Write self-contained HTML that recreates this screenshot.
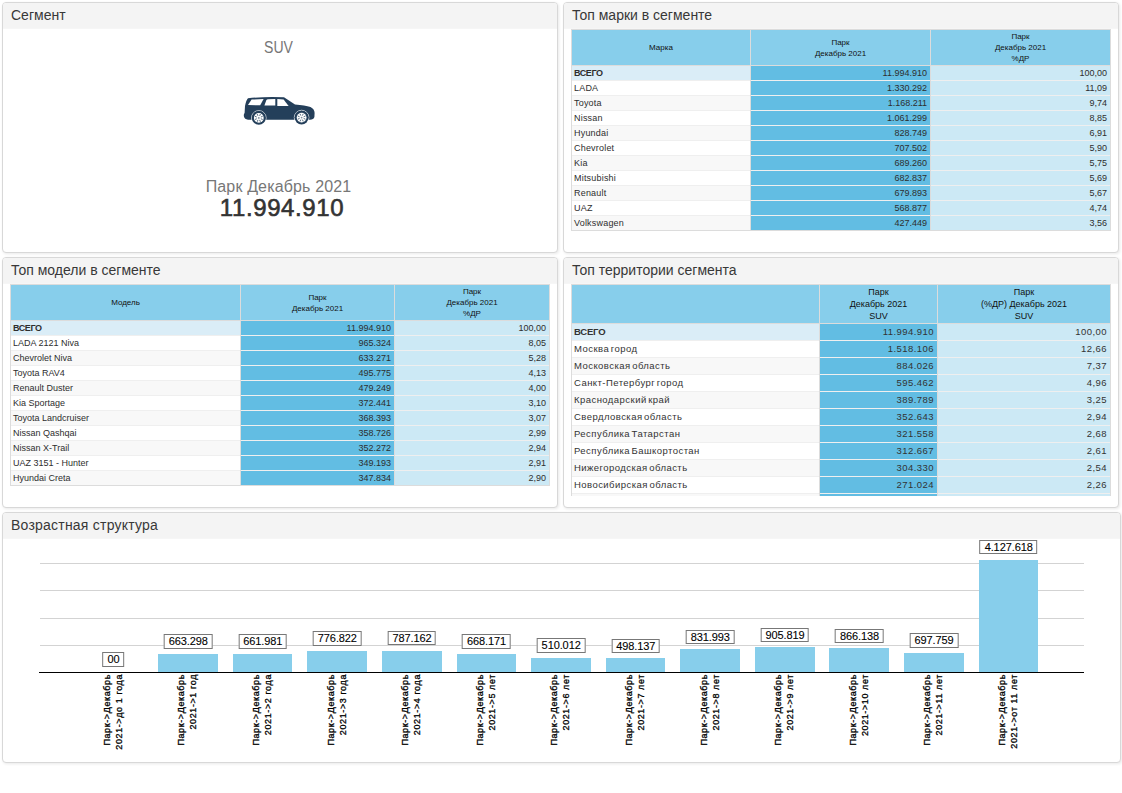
<!DOCTYPE html>
<html><head><meta charset="utf-8">
<style>
html,body{margin:0;padding:0;background:#fff;width:1122px;height:793px;overflow:hidden;font-family:"Liberation Sans",sans-serif;color:#333}
.p{position:absolute;box-sizing:border-box;border:1px solid #d8d8d8;border-radius:4px;background:#fff;box-shadow:1px 1px 3px rgba(0,0,0,.09)}
.ph{position:absolute;left:0;top:0;right:0;height:25px;background:#f4f4f4;border-bottom:1px solid #f6f6f6;border-radius:3px 3px 0 0}
.pt{position:absolute;left:8px;top:4px;font-size:14px;color:#383838;white-space:nowrap}
.a{position:absolute;white-space:nowrap}
.r{position:absolute}
.c{position:absolute;box-sizing:border-box;overflow:hidden;white-space:nowrap}
.hc{position:absolute;display:flex;align-items:center;justify-content:center;text-align:center;white-space:nowrap}
.lb{position:absolute;transform:translateX(-50%);box-sizing:border-box;height:14.4px;border:1px solid #777;background:#fff;font-size:11px;line-height:12.4px;padding:0 3.6px 0 4px;letter-spacing:-0.1px;color:#000;-webkit-text-stroke:0.1px #000;white-space:nowrap}
.xl{position:absolute;width:0;height:0}
.xl>div{position:absolute;right:0;top:0;transform-origin:100% 0;transform:translate(0,0) rotate(-90deg) translate(0,-50%);text-align:right;font-size:9px;line-height:12px;color:#000;letter-spacing:0.6px;-webkit-text-stroke:0.3px #000;white-space:nowrap}
</style></head><body>
<div class="p" style="left:2px;top:2px;width:556px;height:251px">
  <div class="ph"><div class="pt">Сегмент</div></div>
  <div class="a" style="left:0;width:551px;top:36px;text-align:center;font-size:15.6px;color:#777;transform:scaleX(0.9)">SUV</div>
  <svg class="a" style="left:234px;top:89px" width="84" height="40" viewBox="237 92 84 40">
    <path fill="#243f5a" d="M248 98.3 Q266 96.3 284 97.3 L295 104.6 Q305 105.6 310.5 107 Q314.6 109 314.6 113 L314.4 117 Q313.6 119.6 310 119.8 L248 119.8 Q244.5 119.2 244 116.8 Q243.4 114.2 244.6 113 L245 106 Q246 100.5 248 98.3 Z"/>
    <g fill="#fff">
      <path d="M248 105 L251.6 99.6 L263.6 99.1 L260.2 105.3 Z"/>
      <path d="M264.4 105.4 L266.4 100 Q266.9 99.3 268 99.3 L275.3 99.1 L275.3 105.6 Z"/>
      <path d="M277.3 99.1 L283.6 99.4 L288.6 106 L277.3 106 Z"/>
    </g>
    <g>
      <circle cx="258.8" cy="117.9" r="7.35" fill="none" stroke="#fff" stroke-width="0.8" stroke-opacity="0.85"/>
      <circle cx="258.8" cy="117.9" r="6.9" fill="#243f5a"/>
      <circle cx="258.8" cy="117.9" r="4.9" fill="#fff"/>
      <g stroke="#243f5a" stroke-width="0.9" stroke-opacity="0.85"><line x1="260.83" y1="118.74" x2="262.68" y2="119.51"/><line x1="259.64" y1="119.93" x2="260.41" y2="121.78"/><line x1="257.96" y1="119.93" x2="257.19" y2="121.78"/><line x1="256.77" y1="118.74" x2="254.92" y2="119.51"/><line x1="256.77" y1="117.06" x2="254.92" y2="116.29"/><line x1="257.96" y1="115.87" x2="257.19" y2="114.02"/><line x1="259.64" y1="115.87" x2="260.41" y2="114.02"/><line x1="260.83" y1="117.06" x2="262.68" y2="116.29"/></g>
      <circle cx="258.8" cy="117.9" r="0.9" fill="#243f5a" fill-opacity="0.6"/>
      <circle cx="301.6" cy="117.6" r="7.35" fill="none" stroke="#fff" stroke-width="0.8" stroke-opacity="0.85"/>
      <circle cx="301.6" cy="117.6" r="6.9" fill="#243f5a"/>
      <circle cx="301.6" cy="117.6" r="4.9" fill="#fff"/>
      <g stroke="#243f5a" stroke-width="0.9" stroke-opacity="0.85"><line x1="303.63" y1="118.44" x2="305.48" y2="119.21"/><line x1="302.44" y1="119.63" x2="303.21" y2="121.48"/><line x1="300.76" y1="119.63" x2="299.99" y2="121.48"/><line x1="299.57" y1="118.44" x2="297.72" y2="119.21"/><line x1="299.57" y1="116.76" x2="297.72" y2="115.99"/><line x1="300.76" y1="115.57" x2="299.99" y2="113.72"/><line x1="302.44" y1="115.57" x2="303.21" y2="113.72"/><line x1="303.63" y1="116.76" x2="305.48" y2="115.99"/></g>
      <circle cx="301.6" cy="117.6" r="0.9" fill="#243f5a" fill-opacity="0.6"/>
    </g>
  </svg>
  <div class="a" style="left:0;width:551px;top:175px;text-align:center;font-size:16px;color:#777;letter-spacing:0.15px">Парк Декабрь 2021</div>
  <div class="a" style="left:0;width:558px;top:191px;text-align:center;font-size:24px;color:#333;-webkit-text-stroke:0.6px #333;letter-spacing:0.6px">11.994.910</div>
</div>
<div class="p" style="left:563px;top:2px;width:556px;height:251px"><div class="ph"><div class="pt">Топ марки в сегменте</div></div></div>
<div class="p" style="left:2px;top:257px;width:556px;height:251px"><div class="ph"><div class="pt">Топ модели в сегменте</div></div></div>
<div class="p" style="left:563px;top:257px;width:556px;height:251px"><div class="ph"><div class="pt">Топ территории сегмента</div></div></div>
<div class="p" style="left:2px;top:512px;width:1119px;height:251px"><div class="ph"><div class="pt" style="letter-spacing:0.22px">Возрастная структура</div></div></div>
<div class="r" style="left:571px;top:29px;width:540px;height:202px;background:#dcdcdc;"></div>
<div class="r" style="left:572px;top:30px;width:178px;height:35px;background:#87ceeb;"></div>
<div class="hc" style="left:572px;top:30px;width:178px;height:35px;font-size:8px;line-height:11px;color:#111;"><div>Марка</div></div>
<div class="r" style="left:751px;top:30px;width:179px;height:35px;background:#87ceeb;"></div>
<div class="hc" style="left:751px;top:30px;width:179px;height:35px;font-size:8px;line-height:11px;color:#111;"><div>Парк<br>Декабрь 2021</div></div>
<div class="r" style="left:931px;top:30px;width:179px;height:35px;background:#87ceeb;"></div>
<div class="hc" style="left:931px;top:30px;width:179px;height:35px;font-size:8px;line-height:11px;color:#111;"><div>Парк<br>Декабрь 2021<br>%ДР</div></div>
<div class="r" style="left:572px;top:66px;width:178px;height:14px;background:#daedf7;"></div>
<div class="r" style="left:572px;top:80px;width:178px;height:1px;background:#efefef;"></div>
<div class="c" style="left:572px;top:66px;width:178px;height:14px;font-size:9px;line-height:14px;color:#2e2e2e;text-align:left;padding-left:2px;font-weight:bold;letter-spacing:-0.4px;">ВСЕГО</div>
<div class="r" style="left:751px;top:66px;width:179px;height:14px;background:#62bde3;"></div>
<div class="r" style="left:751px;top:80px;width:179px;height:1px;background:#efefef;"></div>
<div class="c" style="left:751px;top:66px;width:179px;height:14px;font-size:9px;line-height:14px;color:#2e2e2e;text-align:right;padding-right:3px;">11.994.910</div>
<div class="r" style="left:931px;top:66px;width:179px;height:14px;background:#cce9f5;"></div>
<div class="r" style="left:931px;top:80px;width:179px;height:1px;background:#efefef;"></div>
<div class="c" style="left:931px;top:66px;width:179px;height:14px;font-size:9px;line-height:14px;color:#2e2e2e;text-align:right;padding-right:3px;">100,00</div>
<div class="r" style="left:572px;top:81px;width:178px;height:14px;background:#fff;"></div>
<div class="r" style="left:572px;top:95px;width:178px;height:1px;background:#efefef;"></div>
<div class="c" style="left:572px;top:81px;width:178px;height:14px;font-size:9px;line-height:14px;color:#2e2e2e;text-align:left;padding-left:2px;letter-spacing:0.2px;">LADA</div>
<div class="r" style="left:751px;top:81px;width:179px;height:14px;background:#62bde3;"></div>
<div class="r" style="left:751px;top:95px;width:179px;height:1px;background:#efefef;"></div>
<div class="c" style="left:751px;top:81px;width:179px;height:14px;font-size:9px;line-height:14px;color:#2e2e2e;text-align:right;padding-right:3px;">1.330.292</div>
<div class="r" style="left:931px;top:81px;width:179px;height:14px;background:#cce9f5;"></div>
<div class="r" style="left:931px;top:95px;width:179px;height:1px;background:#efefef;"></div>
<div class="c" style="left:931px;top:81px;width:179px;height:14px;font-size:9px;line-height:14px;color:#2e2e2e;text-align:right;padding-right:3px;">11,09</div>
<div class="r" style="left:572px;top:96px;width:178px;height:14px;background:#f8f8f8;"></div>
<div class="r" style="left:572px;top:110px;width:178px;height:1px;background:#efefef;"></div>
<div class="c" style="left:572px;top:96px;width:178px;height:14px;font-size:9px;line-height:14px;color:#2e2e2e;text-align:left;padding-left:2px;letter-spacing:0.2px;">Toyota</div>
<div class="r" style="left:751px;top:96px;width:179px;height:14px;background:#62bde3;"></div>
<div class="r" style="left:751px;top:110px;width:179px;height:1px;background:#efefef;"></div>
<div class="c" style="left:751px;top:96px;width:179px;height:14px;font-size:9px;line-height:14px;color:#2e2e2e;text-align:right;padding-right:3px;">1.168.211</div>
<div class="r" style="left:931px;top:96px;width:179px;height:14px;background:#cce9f5;"></div>
<div class="r" style="left:931px;top:110px;width:179px;height:1px;background:#efefef;"></div>
<div class="c" style="left:931px;top:96px;width:179px;height:14px;font-size:9px;line-height:14px;color:#2e2e2e;text-align:right;padding-right:3px;">9,74</div>
<div class="r" style="left:572px;top:111px;width:178px;height:14px;background:#fff;"></div>
<div class="r" style="left:572px;top:125px;width:178px;height:1px;background:#efefef;"></div>
<div class="c" style="left:572px;top:111px;width:178px;height:14px;font-size:9px;line-height:14px;color:#2e2e2e;text-align:left;padding-left:2px;letter-spacing:0.2px;">Nissan</div>
<div class="r" style="left:751px;top:111px;width:179px;height:14px;background:#62bde3;"></div>
<div class="r" style="left:751px;top:125px;width:179px;height:1px;background:#efefef;"></div>
<div class="c" style="left:751px;top:111px;width:179px;height:14px;font-size:9px;line-height:14px;color:#2e2e2e;text-align:right;padding-right:3px;">1.061.299</div>
<div class="r" style="left:931px;top:111px;width:179px;height:14px;background:#cce9f5;"></div>
<div class="r" style="left:931px;top:125px;width:179px;height:1px;background:#efefef;"></div>
<div class="c" style="left:931px;top:111px;width:179px;height:14px;font-size:9px;line-height:14px;color:#2e2e2e;text-align:right;padding-right:3px;">8,85</div>
<div class="r" style="left:572px;top:126px;width:178px;height:14px;background:#f8f8f8;"></div>
<div class="r" style="left:572px;top:140px;width:178px;height:1px;background:#efefef;"></div>
<div class="c" style="left:572px;top:126px;width:178px;height:14px;font-size:9px;line-height:14px;color:#2e2e2e;text-align:left;padding-left:2px;letter-spacing:0.2px;">Hyundai</div>
<div class="r" style="left:751px;top:126px;width:179px;height:14px;background:#62bde3;"></div>
<div class="r" style="left:751px;top:140px;width:179px;height:1px;background:#efefef;"></div>
<div class="c" style="left:751px;top:126px;width:179px;height:14px;font-size:9px;line-height:14px;color:#2e2e2e;text-align:right;padding-right:3px;">828.749</div>
<div class="r" style="left:931px;top:126px;width:179px;height:14px;background:#cce9f5;"></div>
<div class="r" style="left:931px;top:140px;width:179px;height:1px;background:#efefef;"></div>
<div class="c" style="left:931px;top:126px;width:179px;height:14px;font-size:9px;line-height:14px;color:#2e2e2e;text-align:right;padding-right:3px;">6,91</div>
<div class="r" style="left:572px;top:141px;width:178px;height:14px;background:#fff;"></div>
<div class="r" style="left:572px;top:155px;width:178px;height:1px;background:#efefef;"></div>
<div class="c" style="left:572px;top:141px;width:178px;height:14px;font-size:9px;line-height:14px;color:#2e2e2e;text-align:left;padding-left:2px;letter-spacing:0.2px;">Chevrolet</div>
<div class="r" style="left:751px;top:141px;width:179px;height:14px;background:#62bde3;"></div>
<div class="r" style="left:751px;top:155px;width:179px;height:1px;background:#efefef;"></div>
<div class="c" style="left:751px;top:141px;width:179px;height:14px;font-size:9px;line-height:14px;color:#2e2e2e;text-align:right;padding-right:3px;">707.502</div>
<div class="r" style="left:931px;top:141px;width:179px;height:14px;background:#cce9f5;"></div>
<div class="r" style="left:931px;top:155px;width:179px;height:1px;background:#efefef;"></div>
<div class="c" style="left:931px;top:141px;width:179px;height:14px;font-size:9px;line-height:14px;color:#2e2e2e;text-align:right;padding-right:3px;">5,90</div>
<div class="r" style="left:572px;top:156px;width:178px;height:14px;background:#f8f8f8;"></div>
<div class="r" style="left:572px;top:170px;width:178px;height:1px;background:#efefef;"></div>
<div class="c" style="left:572px;top:156px;width:178px;height:14px;font-size:9px;line-height:14px;color:#2e2e2e;text-align:left;padding-left:2px;letter-spacing:0.2px;">Kia</div>
<div class="r" style="left:751px;top:156px;width:179px;height:14px;background:#62bde3;"></div>
<div class="r" style="left:751px;top:170px;width:179px;height:1px;background:#efefef;"></div>
<div class="c" style="left:751px;top:156px;width:179px;height:14px;font-size:9px;line-height:14px;color:#2e2e2e;text-align:right;padding-right:3px;">689.260</div>
<div class="r" style="left:931px;top:156px;width:179px;height:14px;background:#cce9f5;"></div>
<div class="r" style="left:931px;top:170px;width:179px;height:1px;background:#efefef;"></div>
<div class="c" style="left:931px;top:156px;width:179px;height:14px;font-size:9px;line-height:14px;color:#2e2e2e;text-align:right;padding-right:3px;">5,75</div>
<div class="r" style="left:572px;top:171px;width:178px;height:14px;background:#fff;"></div>
<div class="r" style="left:572px;top:185px;width:178px;height:1px;background:#efefef;"></div>
<div class="c" style="left:572px;top:171px;width:178px;height:14px;font-size:9px;line-height:14px;color:#2e2e2e;text-align:left;padding-left:2px;letter-spacing:0.2px;">Mitsubishi</div>
<div class="r" style="left:751px;top:171px;width:179px;height:14px;background:#62bde3;"></div>
<div class="r" style="left:751px;top:185px;width:179px;height:1px;background:#efefef;"></div>
<div class="c" style="left:751px;top:171px;width:179px;height:14px;font-size:9px;line-height:14px;color:#2e2e2e;text-align:right;padding-right:3px;">682.837</div>
<div class="r" style="left:931px;top:171px;width:179px;height:14px;background:#cce9f5;"></div>
<div class="r" style="left:931px;top:185px;width:179px;height:1px;background:#efefef;"></div>
<div class="c" style="left:931px;top:171px;width:179px;height:14px;font-size:9px;line-height:14px;color:#2e2e2e;text-align:right;padding-right:3px;">5,69</div>
<div class="r" style="left:572px;top:186px;width:178px;height:14px;background:#f8f8f8;"></div>
<div class="r" style="left:572px;top:200px;width:178px;height:1px;background:#efefef;"></div>
<div class="c" style="left:572px;top:186px;width:178px;height:14px;font-size:9px;line-height:14px;color:#2e2e2e;text-align:left;padding-left:2px;letter-spacing:0.2px;">Renault</div>
<div class="r" style="left:751px;top:186px;width:179px;height:14px;background:#62bde3;"></div>
<div class="r" style="left:751px;top:200px;width:179px;height:1px;background:#efefef;"></div>
<div class="c" style="left:751px;top:186px;width:179px;height:14px;font-size:9px;line-height:14px;color:#2e2e2e;text-align:right;padding-right:3px;">679.893</div>
<div class="r" style="left:931px;top:186px;width:179px;height:14px;background:#cce9f5;"></div>
<div class="r" style="left:931px;top:200px;width:179px;height:1px;background:#efefef;"></div>
<div class="c" style="left:931px;top:186px;width:179px;height:14px;font-size:9px;line-height:14px;color:#2e2e2e;text-align:right;padding-right:3px;">5,67</div>
<div class="r" style="left:572px;top:201px;width:178px;height:14px;background:#fff;"></div>
<div class="r" style="left:572px;top:215px;width:178px;height:1px;background:#efefef;"></div>
<div class="c" style="left:572px;top:201px;width:178px;height:14px;font-size:9px;line-height:14px;color:#2e2e2e;text-align:left;padding-left:2px;letter-spacing:0.2px;">UAZ</div>
<div class="r" style="left:751px;top:201px;width:179px;height:14px;background:#62bde3;"></div>
<div class="r" style="left:751px;top:215px;width:179px;height:1px;background:#efefef;"></div>
<div class="c" style="left:751px;top:201px;width:179px;height:14px;font-size:9px;line-height:14px;color:#2e2e2e;text-align:right;padding-right:3px;">568.877</div>
<div class="r" style="left:931px;top:201px;width:179px;height:14px;background:#cce9f5;"></div>
<div class="r" style="left:931px;top:215px;width:179px;height:1px;background:#efefef;"></div>
<div class="c" style="left:931px;top:201px;width:179px;height:14px;font-size:9px;line-height:14px;color:#2e2e2e;text-align:right;padding-right:3px;">4,74</div>
<div class="r" style="left:572px;top:216px;width:178px;height:14px;background:#f8f8f8;"></div>
<div class="c" style="left:572px;top:216px;width:178px;height:14px;font-size:9px;line-height:14px;color:#2e2e2e;text-align:left;padding-left:2px;letter-spacing:0.2px;">Volkswagen</div>
<div class="r" style="left:751px;top:216px;width:179px;height:14px;background:#62bde3;"></div>
<div class="c" style="left:751px;top:216px;width:179px;height:14px;font-size:9px;line-height:14px;color:#2e2e2e;text-align:right;padding-right:3px;">427.449</div>
<div class="r" style="left:931px;top:216px;width:179px;height:14px;background:#cce9f5;"></div>
<div class="c" style="left:931px;top:216px;width:179px;height:14px;font-size:9px;line-height:14px;color:#2e2e2e;text-align:right;padding-right:3px;">3,56</div>
<div class="r" style="left:10px;top:284px;width:540px;height:202px;background:#dcdcdc;"></div>
<div class="r" style="left:11px;top:285px;width:229px;height:35px;background:#87ceeb;"></div>
<div class="hc" style="left:11px;top:285px;width:229px;height:35px;font-size:8px;line-height:11px;color:#111;"><div>Модель</div></div>
<div class="r" style="left:241px;top:285px;width:153px;height:35px;background:#87ceeb;"></div>
<div class="hc" style="left:241px;top:285px;width:153px;height:35px;font-size:8px;line-height:11px;color:#111;"><div>Парк<br>Декабрь 2021</div></div>
<div class="r" style="left:395px;top:285px;width:154px;height:35px;background:#87ceeb;"></div>
<div class="hc" style="left:395px;top:285px;width:154px;height:35px;font-size:8px;line-height:11px;color:#111;"><div>Парк<br>Декабрь 2021<br>%ДР</div></div>
<div class="r" style="left:11px;top:321px;width:229px;height:14px;background:#daedf7;"></div>
<div class="r" style="left:11px;top:335px;width:229px;height:1px;background:#efefef;"></div>
<div class="c" style="left:11px;top:321px;width:229px;height:14px;font-size:9px;line-height:14px;color:#2e2e2e;text-align:left;padding-left:2px;font-weight:bold;letter-spacing:-0.4px;">ВСЕГО</div>
<div class="r" style="left:241px;top:321px;width:153px;height:14px;background:#62bde3;"></div>
<div class="r" style="left:241px;top:335px;width:153px;height:1px;background:#efefef;"></div>
<div class="c" style="left:241px;top:321px;width:153px;height:14px;font-size:9px;line-height:14px;color:#2e2e2e;text-align:right;padding-right:3px;">11.994.910</div>
<div class="r" style="left:395px;top:321px;width:154px;height:14px;background:#cce9f5;"></div>
<div class="r" style="left:395px;top:335px;width:154px;height:1px;background:#efefef;"></div>
<div class="c" style="left:395px;top:321px;width:154px;height:14px;font-size:9px;line-height:14px;color:#2e2e2e;text-align:right;padding-right:3px;">100,00</div>
<div class="r" style="left:11px;top:336px;width:229px;height:14px;background:#fff;"></div>
<div class="r" style="left:11px;top:350px;width:229px;height:1px;background:#efefef;"></div>
<div class="c" style="left:11px;top:336px;width:229px;height:14px;font-size:9px;line-height:14px;color:#2e2e2e;text-align:left;padding-left:2px;">LADA 2121 Niva</div>
<div class="r" style="left:241px;top:336px;width:153px;height:14px;background:#62bde3;"></div>
<div class="r" style="left:241px;top:350px;width:153px;height:1px;background:#efefef;"></div>
<div class="c" style="left:241px;top:336px;width:153px;height:14px;font-size:9px;line-height:14px;color:#2e2e2e;text-align:right;padding-right:3px;">965.324</div>
<div class="r" style="left:395px;top:336px;width:154px;height:14px;background:#cce9f5;"></div>
<div class="r" style="left:395px;top:350px;width:154px;height:1px;background:#efefef;"></div>
<div class="c" style="left:395px;top:336px;width:154px;height:14px;font-size:9px;line-height:14px;color:#2e2e2e;text-align:right;padding-right:3px;">8,05</div>
<div class="r" style="left:11px;top:351px;width:229px;height:14px;background:#f8f8f8;"></div>
<div class="r" style="left:11px;top:365px;width:229px;height:1px;background:#efefef;"></div>
<div class="c" style="left:11px;top:351px;width:229px;height:14px;font-size:9px;line-height:14px;color:#2e2e2e;text-align:left;padding-left:2px;">Chevrolet Niva</div>
<div class="r" style="left:241px;top:351px;width:153px;height:14px;background:#62bde3;"></div>
<div class="r" style="left:241px;top:365px;width:153px;height:1px;background:#efefef;"></div>
<div class="c" style="left:241px;top:351px;width:153px;height:14px;font-size:9px;line-height:14px;color:#2e2e2e;text-align:right;padding-right:3px;">633.271</div>
<div class="r" style="left:395px;top:351px;width:154px;height:14px;background:#cce9f5;"></div>
<div class="r" style="left:395px;top:365px;width:154px;height:1px;background:#efefef;"></div>
<div class="c" style="left:395px;top:351px;width:154px;height:14px;font-size:9px;line-height:14px;color:#2e2e2e;text-align:right;padding-right:3px;">5,28</div>
<div class="r" style="left:11px;top:366px;width:229px;height:14px;background:#fff;"></div>
<div class="r" style="left:11px;top:380px;width:229px;height:1px;background:#efefef;"></div>
<div class="c" style="left:11px;top:366px;width:229px;height:14px;font-size:9px;line-height:14px;color:#2e2e2e;text-align:left;padding-left:2px;">Toyota RAV4</div>
<div class="r" style="left:241px;top:366px;width:153px;height:14px;background:#62bde3;"></div>
<div class="r" style="left:241px;top:380px;width:153px;height:1px;background:#efefef;"></div>
<div class="c" style="left:241px;top:366px;width:153px;height:14px;font-size:9px;line-height:14px;color:#2e2e2e;text-align:right;padding-right:3px;">495.775</div>
<div class="r" style="left:395px;top:366px;width:154px;height:14px;background:#cce9f5;"></div>
<div class="r" style="left:395px;top:380px;width:154px;height:1px;background:#efefef;"></div>
<div class="c" style="left:395px;top:366px;width:154px;height:14px;font-size:9px;line-height:14px;color:#2e2e2e;text-align:right;padding-right:3px;">4,13</div>
<div class="r" style="left:11px;top:381px;width:229px;height:14px;background:#f8f8f8;"></div>
<div class="r" style="left:11px;top:395px;width:229px;height:1px;background:#efefef;"></div>
<div class="c" style="left:11px;top:381px;width:229px;height:14px;font-size:9px;line-height:14px;color:#2e2e2e;text-align:left;padding-left:2px;">Renault Duster</div>
<div class="r" style="left:241px;top:381px;width:153px;height:14px;background:#62bde3;"></div>
<div class="r" style="left:241px;top:395px;width:153px;height:1px;background:#efefef;"></div>
<div class="c" style="left:241px;top:381px;width:153px;height:14px;font-size:9px;line-height:14px;color:#2e2e2e;text-align:right;padding-right:3px;">479.249</div>
<div class="r" style="left:395px;top:381px;width:154px;height:14px;background:#cce9f5;"></div>
<div class="r" style="left:395px;top:395px;width:154px;height:1px;background:#efefef;"></div>
<div class="c" style="left:395px;top:381px;width:154px;height:14px;font-size:9px;line-height:14px;color:#2e2e2e;text-align:right;padding-right:3px;">4,00</div>
<div class="r" style="left:11px;top:396px;width:229px;height:14px;background:#fff;"></div>
<div class="r" style="left:11px;top:410px;width:229px;height:1px;background:#efefef;"></div>
<div class="c" style="left:11px;top:396px;width:229px;height:14px;font-size:9px;line-height:14px;color:#2e2e2e;text-align:left;padding-left:2px;">Kia Sportage</div>
<div class="r" style="left:241px;top:396px;width:153px;height:14px;background:#62bde3;"></div>
<div class="r" style="left:241px;top:410px;width:153px;height:1px;background:#efefef;"></div>
<div class="c" style="left:241px;top:396px;width:153px;height:14px;font-size:9px;line-height:14px;color:#2e2e2e;text-align:right;padding-right:3px;">372.441</div>
<div class="r" style="left:395px;top:396px;width:154px;height:14px;background:#cce9f5;"></div>
<div class="r" style="left:395px;top:410px;width:154px;height:1px;background:#efefef;"></div>
<div class="c" style="left:395px;top:396px;width:154px;height:14px;font-size:9px;line-height:14px;color:#2e2e2e;text-align:right;padding-right:3px;">3,10</div>
<div class="r" style="left:11px;top:411px;width:229px;height:14px;background:#f8f8f8;"></div>
<div class="r" style="left:11px;top:425px;width:229px;height:1px;background:#efefef;"></div>
<div class="c" style="left:11px;top:411px;width:229px;height:14px;font-size:9px;line-height:14px;color:#2e2e2e;text-align:left;padding-left:2px;">Toyota Landcruiser</div>
<div class="r" style="left:241px;top:411px;width:153px;height:14px;background:#62bde3;"></div>
<div class="r" style="left:241px;top:425px;width:153px;height:1px;background:#efefef;"></div>
<div class="c" style="left:241px;top:411px;width:153px;height:14px;font-size:9px;line-height:14px;color:#2e2e2e;text-align:right;padding-right:3px;">368.393</div>
<div class="r" style="left:395px;top:411px;width:154px;height:14px;background:#cce9f5;"></div>
<div class="r" style="left:395px;top:425px;width:154px;height:1px;background:#efefef;"></div>
<div class="c" style="left:395px;top:411px;width:154px;height:14px;font-size:9px;line-height:14px;color:#2e2e2e;text-align:right;padding-right:3px;">3,07</div>
<div class="r" style="left:11px;top:426px;width:229px;height:14px;background:#fff;"></div>
<div class="r" style="left:11px;top:440px;width:229px;height:1px;background:#efefef;"></div>
<div class="c" style="left:11px;top:426px;width:229px;height:14px;font-size:9px;line-height:14px;color:#2e2e2e;text-align:left;padding-left:2px;">Nissan Qashqai</div>
<div class="r" style="left:241px;top:426px;width:153px;height:14px;background:#62bde3;"></div>
<div class="r" style="left:241px;top:440px;width:153px;height:1px;background:#efefef;"></div>
<div class="c" style="left:241px;top:426px;width:153px;height:14px;font-size:9px;line-height:14px;color:#2e2e2e;text-align:right;padding-right:3px;">358.726</div>
<div class="r" style="left:395px;top:426px;width:154px;height:14px;background:#cce9f5;"></div>
<div class="r" style="left:395px;top:440px;width:154px;height:1px;background:#efefef;"></div>
<div class="c" style="left:395px;top:426px;width:154px;height:14px;font-size:9px;line-height:14px;color:#2e2e2e;text-align:right;padding-right:3px;">2,99</div>
<div class="r" style="left:11px;top:441px;width:229px;height:14px;background:#f8f8f8;"></div>
<div class="r" style="left:11px;top:455px;width:229px;height:1px;background:#efefef;"></div>
<div class="c" style="left:11px;top:441px;width:229px;height:14px;font-size:9px;line-height:14px;color:#2e2e2e;text-align:left;padding-left:2px;">Nissan X-Trail</div>
<div class="r" style="left:241px;top:441px;width:153px;height:14px;background:#62bde3;"></div>
<div class="r" style="left:241px;top:455px;width:153px;height:1px;background:#efefef;"></div>
<div class="c" style="left:241px;top:441px;width:153px;height:14px;font-size:9px;line-height:14px;color:#2e2e2e;text-align:right;padding-right:3px;">352.272</div>
<div class="r" style="left:395px;top:441px;width:154px;height:14px;background:#cce9f5;"></div>
<div class="r" style="left:395px;top:455px;width:154px;height:1px;background:#efefef;"></div>
<div class="c" style="left:395px;top:441px;width:154px;height:14px;font-size:9px;line-height:14px;color:#2e2e2e;text-align:right;padding-right:3px;">2,94</div>
<div class="r" style="left:11px;top:456px;width:229px;height:14px;background:#fff;"></div>
<div class="r" style="left:11px;top:470px;width:229px;height:1px;background:#efefef;"></div>
<div class="c" style="left:11px;top:456px;width:229px;height:14px;font-size:9px;line-height:14px;color:#2e2e2e;text-align:left;padding-left:2px;">UAZ 3151 - Hunter</div>
<div class="r" style="left:241px;top:456px;width:153px;height:14px;background:#62bde3;"></div>
<div class="r" style="left:241px;top:470px;width:153px;height:1px;background:#efefef;"></div>
<div class="c" style="left:241px;top:456px;width:153px;height:14px;font-size:9px;line-height:14px;color:#2e2e2e;text-align:right;padding-right:3px;">349.193</div>
<div class="r" style="left:395px;top:456px;width:154px;height:14px;background:#cce9f5;"></div>
<div class="r" style="left:395px;top:470px;width:154px;height:1px;background:#efefef;"></div>
<div class="c" style="left:395px;top:456px;width:154px;height:14px;font-size:9px;line-height:14px;color:#2e2e2e;text-align:right;padding-right:3px;">2,91</div>
<div class="r" style="left:11px;top:471px;width:229px;height:14px;background:#f8f8f8;"></div>
<div class="c" style="left:11px;top:471px;width:229px;height:14px;font-size:9px;line-height:14px;color:#2e2e2e;text-align:left;padding-left:2px;">Hyundai Creta</div>
<div class="r" style="left:241px;top:471px;width:153px;height:14px;background:#62bde3;"></div>
<div class="c" style="left:241px;top:471px;width:153px;height:14px;font-size:9px;line-height:14px;color:#2e2e2e;text-align:right;padding-right:3px;">347.834</div>
<div class="r" style="left:395px;top:471px;width:154px;height:14px;background:#cce9f5;"></div>
<div class="c" style="left:395px;top:471px;width:154px;height:14px;font-size:9px;line-height:14px;color:#2e2e2e;text-align:right;padding-right:3px;">2,90</div>
<div style="position:absolute;left:0;top:0;width:1122px;height:496px;overflow:hidden"><div class="r" style="left:571px;top:284px;width:540px;height:227px;background:#dcdcdc;"></div>
<div class="r" style="left:572px;top:285px;width:247px;height:38px;background:#87ceeb;"></div>
<div class="hc" style="left:572px;top:285px;width:247px;height:38px;font-size:9px;line-height:12px;color:#111;"><div></div></div>
<div class="r" style="left:820px;top:285px;width:117px;height:38px;background:#87ceeb;"></div>
<div class="hc" style="left:820px;top:285px;width:117px;height:38px;font-size:9px;line-height:12px;color:#111;"><div>Парк<br>Декабрь 2021<br>SUV</div></div>
<div class="r" style="left:938px;top:285px;width:172px;height:38px;background:#87ceeb;"></div>
<div class="hc" style="left:938px;top:285px;width:172px;height:38px;font-size:9px;line-height:12px;color:#111;"><div>Парк<br>(%ДР) Декабрь 2021<br>SUV</div></div>
<div class="r" style="left:572px;top:324px;width:247px;height:16px;background:#daedf7;"></div>
<div class="r" style="left:572px;top:340px;width:247px;height:1px;background:#efefef;"></div>
<div class="c" style="left:572px;top:324px;width:247px;height:16px;font-size:9.5px;line-height:16px;color:#333;letter-spacing:0.45px;word-spacing:-1.5px;text-align:left;padding-left:2px;font-weight:bold;letter-spacing:-0.2px;">ВСЕГО</div>
<div class="r" style="left:820px;top:324px;width:117px;height:16px;background:#62bde3;"></div>
<div class="r" style="left:820px;top:340px;width:117px;height:1px;background:#efefef;"></div>
<div class="c" style="left:820px;top:324px;width:117px;height:16px;font-size:9.5px;line-height:16px;color:#333;letter-spacing:0.45px;word-spacing:-1.5px;text-align:right;padding-right:3px;">11.994.910</div>
<div class="r" style="left:938px;top:324px;width:172px;height:16px;background:#cce9f5;"></div>
<div class="r" style="left:938px;top:340px;width:172px;height:1px;background:#efefef;"></div>
<div class="c" style="left:938px;top:324px;width:172px;height:16px;font-size:9.5px;line-height:16px;color:#333;letter-spacing:0.45px;word-spacing:-1.5px;text-align:right;padding-right:3px;">100,00</div>
<div class="r" style="left:572px;top:341px;width:247px;height:16px;background:#fff;"></div>
<div class="r" style="left:572px;top:357px;width:247px;height:1px;background:#efefef;"></div>
<div class="c" style="left:572px;top:341px;width:247px;height:16px;font-size:9.5px;line-height:16px;color:#333;letter-spacing:0.45px;word-spacing:-1.5px;text-align:left;padding-left:2px;">Москва город</div>
<div class="r" style="left:820px;top:341px;width:117px;height:16px;background:#62bde3;"></div>
<div class="r" style="left:820px;top:357px;width:117px;height:1px;background:#efefef;"></div>
<div class="c" style="left:820px;top:341px;width:117px;height:16px;font-size:9.5px;line-height:16px;color:#333;letter-spacing:0.45px;word-spacing:-1.5px;text-align:right;padding-right:3px;">1.518.106</div>
<div class="r" style="left:938px;top:341px;width:172px;height:16px;background:#cce9f5;"></div>
<div class="r" style="left:938px;top:357px;width:172px;height:1px;background:#efefef;"></div>
<div class="c" style="left:938px;top:341px;width:172px;height:16px;font-size:9.5px;line-height:16px;color:#333;letter-spacing:0.45px;word-spacing:-1.5px;text-align:right;padding-right:3px;">12,66</div>
<div class="r" style="left:572px;top:358px;width:247px;height:16px;background:#f8f8f8;"></div>
<div class="r" style="left:572px;top:374px;width:247px;height:1px;background:#efefef;"></div>
<div class="c" style="left:572px;top:358px;width:247px;height:16px;font-size:9.5px;line-height:16px;color:#333;letter-spacing:0.45px;word-spacing:-1.5px;text-align:left;padding-left:2px;">Московская область</div>
<div class="r" style="left:820px;top:358px;width:117px;height:16px;background:#62bde3;"></div>
<div class="r" style="left:820px;top:374px;width:117px;height:1px;background:#efefef;"></div>
<div class="c" style="left:820px;top:358px;width:117px;height:16px;font-size:9.5px;line-height:16px;color:#333;letter-spacing:0.45px;word-spacing:-1.5px;text-align:right;padding-right:3px;">884.026</div>
<div class="r" style="left:938px;top:358px;width:172px;height:16px;background:#cce9f5;"></div>
<div class="r" style="left:938px;top:374px;width:172px;height:1px;background:#efefef;"></div>
<div class="c" style="left:938px;top:358px;width:172px;height:16px;font-size:9.5px;line-height:16px;color:#333;letter-spacing:0.45px;word-spacing:-1.5px;text-align:right;padding-right:3px;">7,37</div>
<div class="r" style="left:572px;top:375px;width:247px;height:16px;background:#fff;"></div>
<div class="r" style="left:572px;top:391px;width:247px;height:1px;background:#efefef;"></div>
<div class="c" style="left:572px;top:375px;width:247px;height:16px;font-size:9.5px;line-height:16px;color:#333;letter-spacing:0.45px;word-spacing:-1.5px;text-align:left;padding-left:2px;">Санкт-Петербург город</div>
<div class="r" style="left:820px;top:375px;width:117px;height:16px;background:#62bde3;"></div>
<div class="r" style="left:820px;top:391px;width:117px;height:1px;background:#efefef;"></div>
<div class="c" style="left:820px;top:375px;width:117px;height:16px;font-size:9.5px;line-height:16px;color:#333;letter-spacing:0.45px;word-spacing:-1.5px;text-align:right;padding-right:3px;">595.462</div>
<div class="r" style="left:938px;top:375px;width:172px;height:16px;background:#cce9f5;"></div>
<div class="r" style="left:938px;top:391px;width:172px;height:1px;background:#efefef;"></div>
<div class="c" style="left:938px;top:375px;width:172px;height:16px;font-size:9.5px;line-height:16px;color:#333;letter-spacing:0.45px;word-spacing:-1.5px;text-align:right;padding-right:3px;">4,96</div>
<div class="r" style="left:572px;top:392px;width:247px;height:16px;background:#f8f8f8;"></div>
<div class="r" style="left:572px;top:408px;width:247px;height:1px;background:#efefef;"></div>
<div class="c" style="left:572px;top:392px;width:247px;height:16px;font-size:9.5px;line-height:16px;color:#333;letter-spacing:0.45px;word-spacing:-1.5px;text-align:left;padding-left:2px;">Краснодарский край</div>
<div class="r" style="left:820px;top:392px;width:117px;height:16px;background:#62bde3;"></div>
<div class="r" style="left:820px;top:408px;width:117px;height:1px;background:#efefef;"></div>
<div class="c" style="left:820px;top:392px;width:117px;height:16px;font-size:9.5px;line-height:16px;color:#333;letter-spacing:0.45px;word-spacing:-1.5px;text-align:right;padding-right:3px;">389.789</div>
<div class="r" style="left:938px;top:392px;width:172px;height:16px;background:#cce9f5;"></div>
<div class="r" style="left:938px;top:408px;width:172px;height:1px;background:#efefef;"></div>
<div class="c" style="left:938px;top:392px;width:172px;height:16px;font-size:9.5px;line-height:16px;color:#333;letter-spacing:0.45px;word-spacing:-1.5px;text-align:right;padding-right:3px;">3,25</div>
<div class="r" style="left:572px;top:409px;width:247px;height:16px;background:#fff;"></div>
<div class="r" style="left:572px;top:425px;width:247px;height:1px;background:#efefef;"></div>
<div class="c" style="left:572px;top:409px;width:247px;height:16px;font-size:9.5px;line-height:16px;color:#333;letter-spacing:0.45px;word-spacing:-1.5px;text-align:left;padding-left:2px;">Свердловская область</div>
<div class="r" style="left:820px;top:409px;width:117px;height:16px;background:#62bde3;"></div>
<div class="r" style="left:820px;top:425px;width:117px;height:1px;background:#efefef;"></div>
<div class="c" style="left:820px;top:409px;width:117px;height:16px;font-size:9.5px;line-height:16px;color:#333;letter-spacing:0.45px;word-spacing:-1.5px;text-align:right;padding-right:3px;">352.643</div>
<div class="r" style="left:938px;top:409px;width:172px;height:16px;background:#cce9f5;"></div>
<div class="r" style="left:938px;top:425px;width:172px;height:1px;background:#efefef;"></div>
<div class="c" style="left:938px;top:409px;width:172px;height:16px;font-size:9.5px;line-height:16px;color:#333;letter-spacing:0.45px;word-spacing:-1.5px;text-align:right;padding-right:3px;">2,94</div>
<div class="r" style="left:572px;top:426px;width:247px;height:16px;background:#f8f8f8;"></div>
<div class="r" style="left:572px;top:442px;width:247px;height:1px;background:#efefef;"></div>
<div class="c" style="left:572px;top:426px;width:247px;height:16px;font-size:9.5px;line-height:16px;color:#333;letter-spacing:0.45px;word-spacing:-1.5px;text-align:left;padding-left:2px;">Республика Татарстан</div>
<div class="r" style="left:820px;top:426px;width:117px;height:16px;background:#62bde3;"></div>
<div class="r" style="left:820px;top:442px;width:117px;height:1px;background:#efefef;"></div>
<div class="c" style="left:820px;top:426px;width:117px;height:16px;font-size:9.5px;line-height:16px;color:#333;letter-spacing:0.45px;word-spacing:-1.5px;text-align:right;padding-right:3px;">321.558</div>
<div class="r" style="left:938px;top:426px;width:172px;height:16px;background:#cce9f5;"></div>
<div class="r" style="left:938px;top:442px;width:172px;height:1px;background:#efefef;"></div>
<div class="c" style="left:938px;top:426px;width:172px;height:16px;font-size:9.5px;line-height:16px;color:#333;letter-spacing:0.45px;word-spacing:-1.5px;text-align:right;padding-right:3px;">2,68</div>
<div class="r" style="left:572px;top:443px;width:247px;height:16px;background:#fff;"></div>
<div class="r" style="left:572px;top:459px;width:247px;height:1px;background:#efefef;"></div>
<div class="c" style="left:572px;top:443px;width:247px;height:16px;font-size:9.5px;line-height:16px;color:#333;letter-spacing:0.45px;word-spacing:-1.5px;text-align:left;padding-left:2px;">Республика Башкортостан</div>
<div class="r" style="left:820px;top:443px;width:117px;height:16px;background:#62bde3;"></div>
<div class="r" style="left:820px;top:459px;width:117px;height:1px;background:#efefef;"></div>
<div class="c" style="left:820px;top:443px;width:117px;height:16px;font-size:9.5px;line-height:16px;color:#333;letter-spacing:0.45px;word-spacing:-1.5px;text-align:right;padding-right:3px;">312.667</div>
<div class="r" style="left:938px;top:443px;width:172px;height:16px;background:#cce9f5;"></div>
<div class="r" style="left:938px;top:459px;width:172px;height:1px;background:#efefef;"></div>
<div class="c" style="left:938px;top:443px;width:172px;height:16px;font-size:9.5px;line-height:16px;color:#333;letter-spacing:0.45px;word-spacing:-1.5px;text-align:right;padding-right:3px;">2,61</div>
<div class="r" style="left:572px;top:460px;width:247px;height:16px;background:#f8f8f8;"></div>
<div class="r" style="left:572px;top:476px;width:247px;height:1px;background:#efefef;"></div>
<div class="c" style="left:572px;top:460px;width:247px;height:16px;font-size:9.5px;line-height:16px;color:#333;letter-spacing:0.45px;word-spacing:-1.5px;text-align:left;padding-left:2px;">Нижегородская область</div>
<div class="r" style="left:820px;top:460px;width:117px;height:16px;background:#62bde3;"></div>
<div class="r" style="left:820px;top:476px;width:117px;height:1px;background:#efefef;"></div>
<div class="c" style="left:820px;top:460px;width:117px;height:16px;font-size:9.5px;line-height:16px;color:#333;letter-spacing:0.45px;word-spacing:-1.5px;text-align:right;padding-right:3px;">304.330</div>
<div class="r" style="left:938px;top:460px;width:172px;height:16px;background:#cce9f5;"></div>
<div class="r" style="left:938px;top:476px;width:172px;height:1px;background:#efefef;"></div>
<div class="c" style="left:938px;top:460px;width:172px;height:16px;font-size:9.5px;line-height:16px;color:#333;letter-spacing:0.45px;word-spacing:-1.5px;text-align:right;padding-right:3px;">2,54</div>
<div class="r" style="left:572px;top:477px;width:247px;height:16px;background:#fff;"></div>
<div class="r" style="left:572px;top:493px;width:247px;height:1px;background:#efefef;"></div>
<div class="c" style="left:572px;top:477px;width:247px;height:16px;font-size:9.5px;line-height:16px;color:#333;letter-spacing:0.45px;word-spacing:-1.5px;text-align:left;padding-left:2px;">Новосибирская область</div>
<div class="r" style="left:820px;top:477px;width:117px;height:16px;background:#62bde3;"></div>
<div class="r" style="left:820px;top:493px;width:117px;height:1px;background:#efefef;"></div>
<div class="c" style="left:820px;top:477px;width:117px;height:16px;font-size:9.5px;line-height:16px;color:#333;letter-spacing:0.45px;word-spacing:-1.5px;text-align:right;padding-right:3px;">271.024</div>
<div class="r" style="left:938px;top:477px;width:172px;height:16px;background:#cce9f5;"></div>
<div class="r" style="left:938px;top:493px;width:172px;height:1px;background:#efefef;"></div>
<div class="c" style="left:938px;top:477px;width:172px;height:16px;font-size:9.5px;line-height:16px;color:#333;letter-spacing:0.45px;word-spacing:-1.5px;text-align:right;padding-right:3px;">2,26</div>
<div class="r" style="left:572px;top:494px;width:247px;height:16px;background:#f8f8f8;"></div>
<div class="c" style="left:572px;top:494px;width:247px;height:16px;font-size:9.5px;line-height:16px;color:#333;letter-spacing:0.45px;word-spacing:-1.5px;text-align:left;padding-left:2px;">Ростовская область</div>
<div class="r" style="left:820px;top:494px;width:117px;height:16px;background:#62bde3;"></div>
<div class="c" style="left:820px;top:494px;width:117px;height:16px;font-size:9.5px;line-height:16px;color:#333;letter-spacing:0.45px;word-spacing:-1.5px;text-align:right;padding-right:3px;">260.000</div>
<div class="r" style="left:938px;top:494px;width:172px;height:16px;background:#cce9f5;"></div>
<div class="c" style="left:938px;top:494px;width:172px;height:16px;font-size:9.5px;line-height:16px;color:#333;letter-spacing:0.45px;word-spacing:-1.5px;text-align:right;padding-right:3px;">2,20</div></div>
<div class="r" style="left:40px;top:645px;width:1044px;height:1px;background:#d3d3d3;"></div>
<div class="r" style="left:40px;top:618px;width:1044px;height:1px;background:#d3d3d3;"></div>
<div class="r" style="left:40px;top:590px;width:1044px;height:1px;background:#d3d3d3;"></div>
<div class="r" style="left:40px;top:563px;width:1044px;height:1px;background:#d3d3d3;"></div>
<div class="lb" style="left:113.40px;top:652.30px">00</div>
<div class="xl" style="left:112.40px;top:674px"><div>Парк-&gt;Декабрь<br>2021-&gt;до 1 года</div></div>
<div class="r" style="left:158.14px;top:653.96px;width:59.7px;height:19.04px;background:#87ceeb"></div>
<div class="lb" style="left:187.99px;top:634.26px">663.298</div>
<div class="xl" style="left:186.99px;top:674px"><div>Парк-&gt;Декабрь<br>2021-&gt;1 год</div></div>
<div class="r" style="left:232.73px;top:653.99px;width:59.7px;height:19.01px;background:#87ceeb"></div>
<div class="lb" style="left:262.58px;top:634.29px">661.981</div>
<div class="xl" style="left:261.58px;top:674px"><div>Парк-&gt;Декабрь<br>2021-&gt;2 года</div></div>
<div class="r" style="left:307.32px;top:650.87px;width:59.7px;height:22.13px;background:#87ceeb"></div>
<div class="lb" style="left:337.17px;top:631.17px">776.822</div>
<div class="xl" style="left:336.17px;top:674px"><div>Парк-&gt;Декабрь<br>2021-&gt;3 года</div></div>
<div class="r" style="left:381.91px;top:650.59px;width:59.7px;height:22.41px;background:#87ceeb"></div>
<div class="lb" style="left:411.76px;top:630.89px">787.162</div>
<div class="xl" style="left:410.76px;top:674px"><div>Парк-&gt;Декабрь<br>2021-&gt;4 года</div></div>
<div class="r" style="left:456.50px;top:653.83px;width:59.7px;height:19.17px;background:#87ceeb"></div>
<div class="lb" style="left:486.35px;top:634.13px">668.171</div>
<div class="xl" style="left:485.35px;top:674px"><div>Парк-&gt;Декабрь<br>2021-&gt;5 лет</div></div>
<div class="r" style="left:531.09px;top:658.13px;width:59.7px;height:14.87px;background:#87ceeb"></div>
<div class="lb" style="left:560.94px;top:638.43px">510.012</div>
<div class="xl" style="left:559.94px;top:674px"><div>Парк-&gt;Декабрь<br>2021-&gt;6 лет</div></div>
<div class="r" style="left:605.68px;top:658.45px;width:59.7px;height:14.55px;background:#87ceeb"></div>
<div class="lb" style="left:635.53px;top:638.75px">498.137</div>
<div class="xl" style="left:634.53px;top:674px"><div>Парк-&gt;Декабрь<br>2021-&gt;7 лет</div></div>
<div class="r" style="left:680.27px;top:649.37px;width:59.7px;height:23.63px;background:#87ceeb"></div>
<div class="lb" style="left:710.12px;top:629.67px">831.993</div>
<div class="xl" style="left:709.12px;top:674px"><div>Парк-&gt;Декабрь<br>2021-&gt;8 лет</div></div>
<div class="r" style="left:754.86px;top:647.36px;width:59.7px;height:25.64px;background:#87ceeb"></div>
<div class="lb" style="left:784.71px;top:627.66px">905.819</div>
<div class="xl" style="left:783.71px;top:674px"><div>Парк-&gt;Декабрь<br>2021-&gt;9 лет</div></div>
<div class="r" style="left:829.45px;top:648.44px;width:59.7px;height:24.56px;background:#87ceeb"></div>
<div class="lb" style="left:859.30px;top:628.74px">866.138</div>
<div class="xl" style="left:858.30px;top:674px"><div>Парк-&gt;Декабрь<br>2021-&gt;10 лет</div></div>
<div class="r" style="left:904.04px;top:653.02px;width:59.7px;height:19.98px;background:#87ceeb"></div>
<div class="lb" style="left:933.89px;top:633.32px">697.759</div>
<div class="xl" style="left:932.89px;top:674px"><div>Парк-&gt;Декабрь<br>2021-&gt;11 лет</div></div>
<div class="r" style="left:978.63px;top:559.73px;width:59.7px;height:113.27px;background:#87ceeb"></div>
<div class="lb" style="left:1008.48px;top:540.03px">4.127.618</div>
<div class="xl" style="left:1007.48px;top:674px"><div>Парк-&gt;Декабрь<br>2021-&gt;от 11 лет</div></div>
<div class="r" style="left:39px;top:672px;width:1045px;height:1px;background:#000;"></div>
</body></html>
